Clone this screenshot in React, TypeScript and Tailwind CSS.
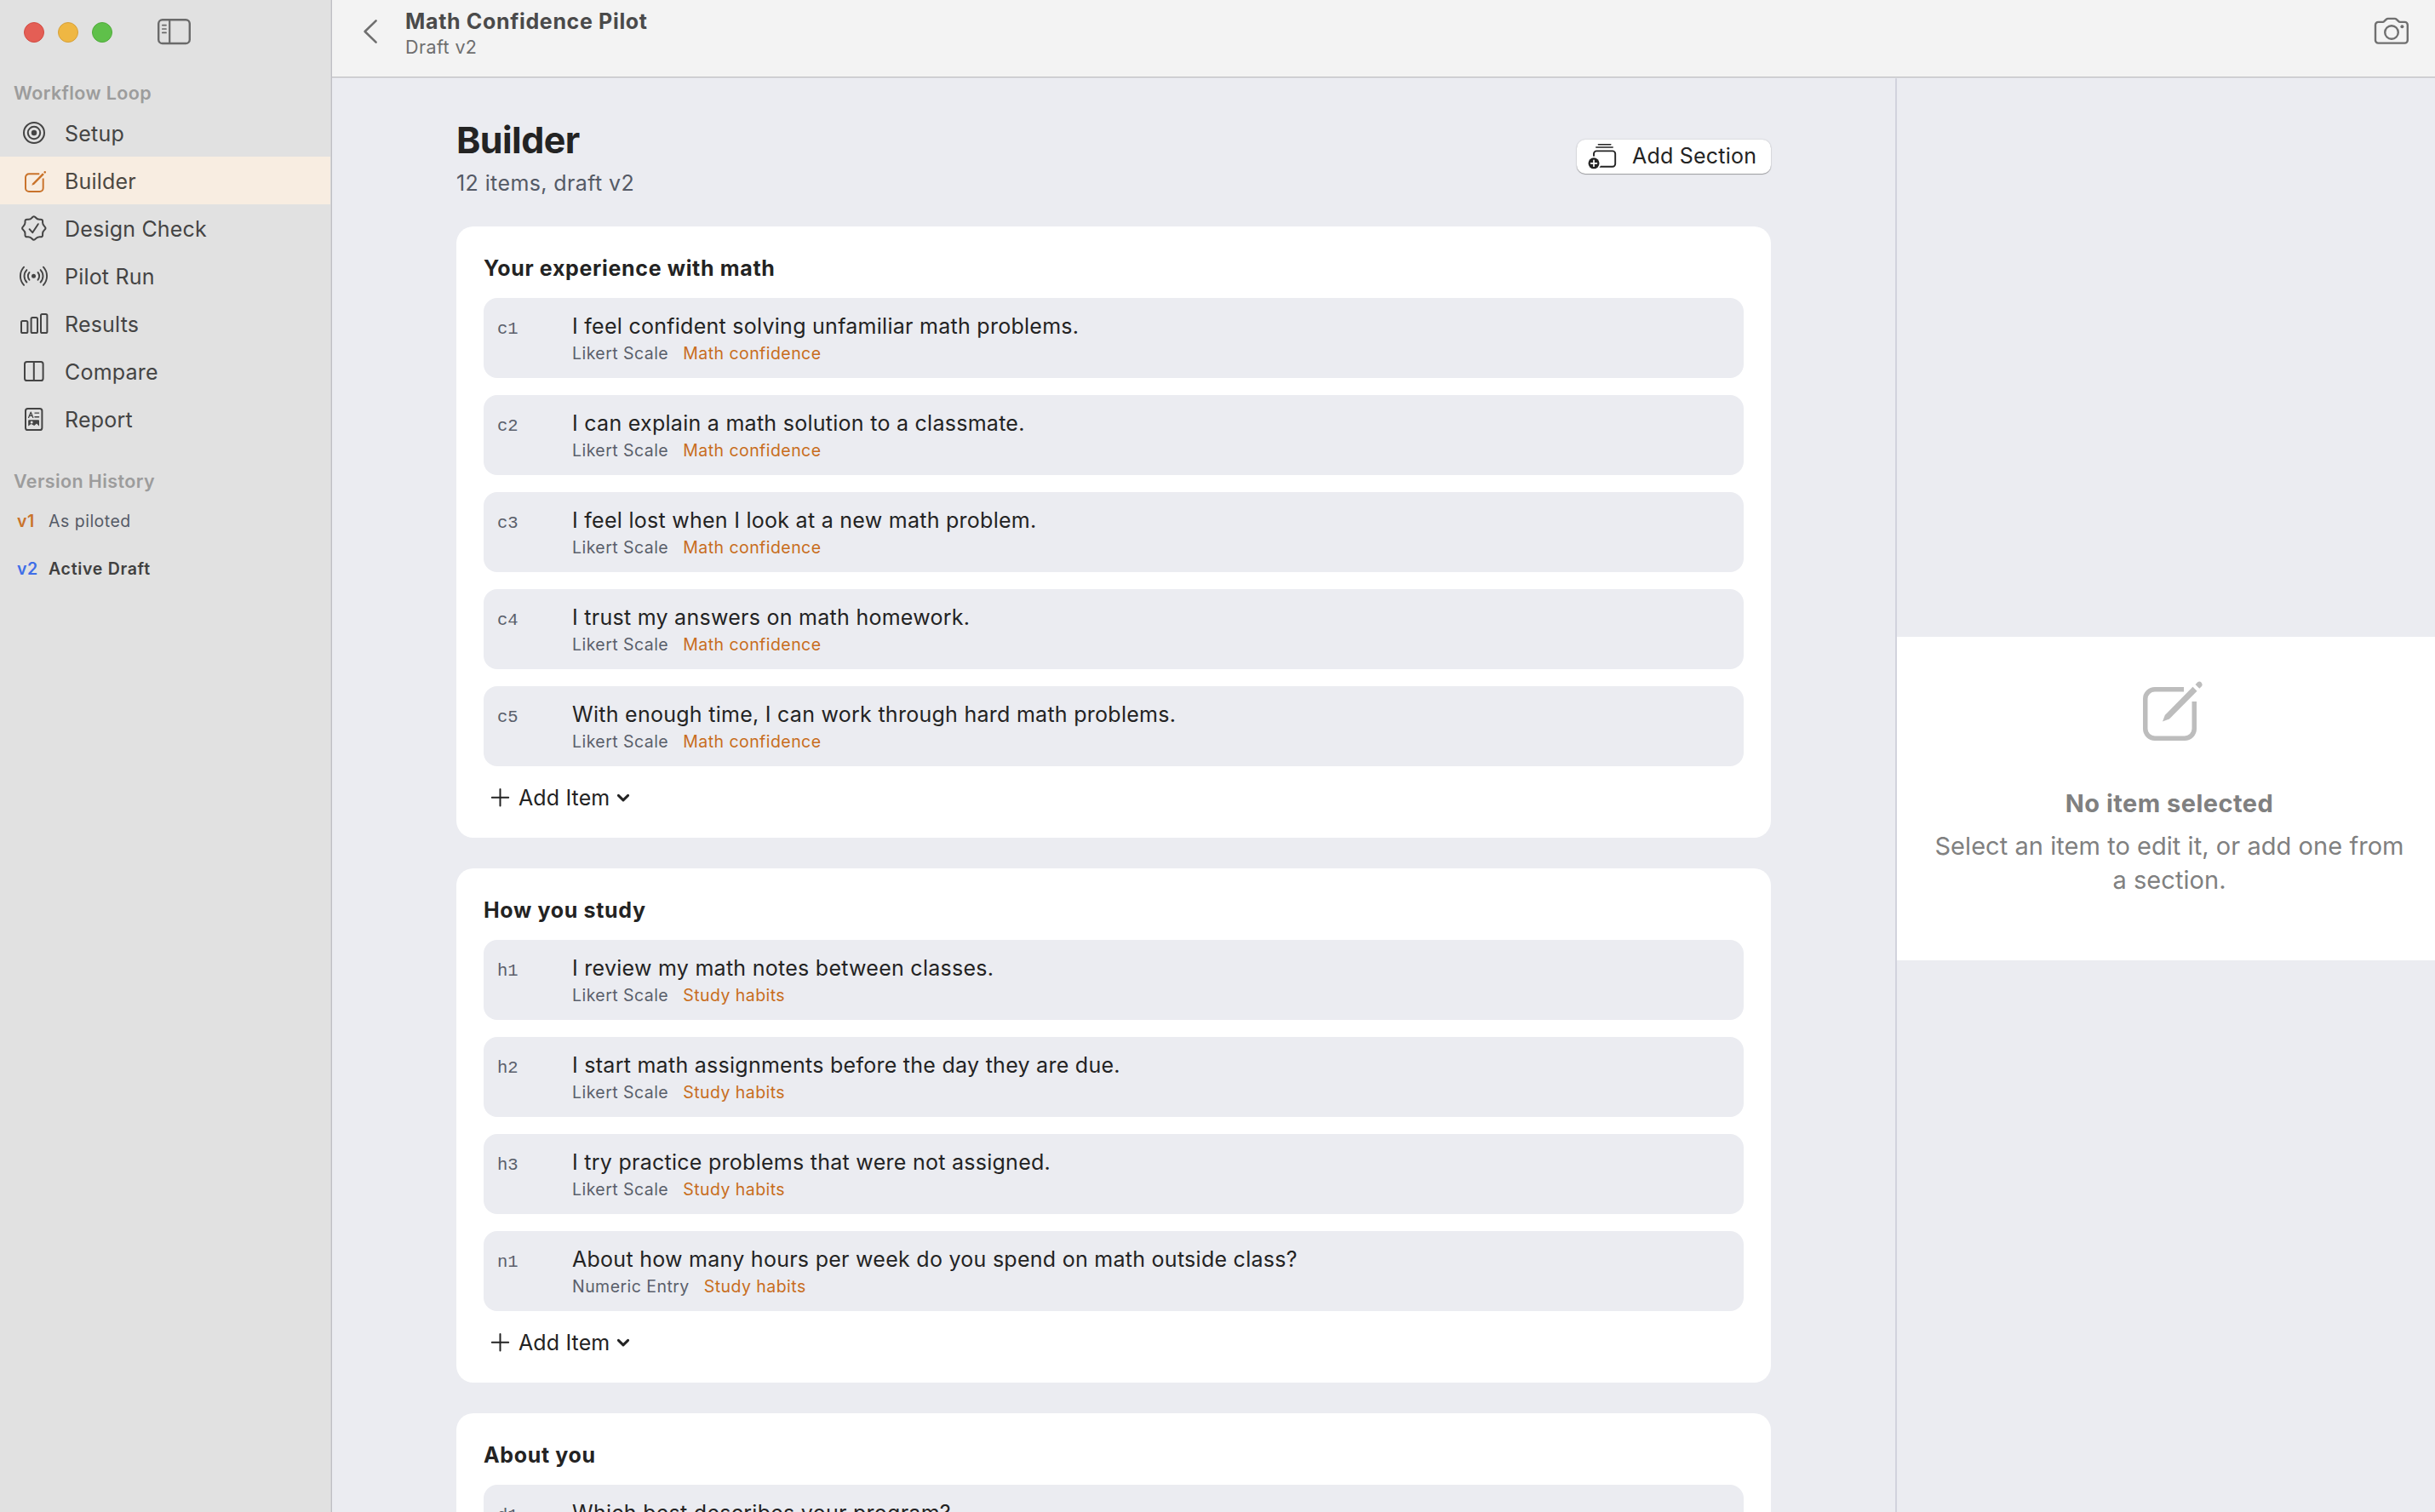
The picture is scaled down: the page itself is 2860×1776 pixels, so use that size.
import React, { ReactNode } from 'react';

interface Item {
  id: string;
  text: string;
  kind: string;
  construct: string;
}

interface Section {
  title: string;
  items: Item[];
}

const sections: Section[] = [
  {
    title: 'Your experience with math',
    items: [
      { id: 'c1', text: 'I feel confident solving unfamiliar math problems.', kind: 'Likert Scale', construct: 'Math confidence' },
      { id: 'c2', text: 'I can explain a math solution to a classmate.', kind: 'Likert Scale', construct: 'Math confidence' },
      { id: 'c3', text: 'I feel lost when I look at a new math problem.', kind: 'Likert Scale', construct: 'Math confidence' },
      { id: 'c4', text: 'I trust my answers on math homework.', kind: 'Likert Scale', construct: 'Math confidence' },
      { id: 'c5', text: 'With enough time, I can work through hard math problems.', kind: 'Likert Scale', construct: 'Math confidence' },
    ],
  },
  {
    title: 'How you study',
    items: [
      { id: 'h1', text: 'I review my math notes between classes.', kind: 'Likert Scale', construct: 'Study habits' },
      { id: 'h2', text: 'I start math assignments before the day they are due.', kind: 'Likert Scale', construct: 'Study habits' },
      { id: 'h3', text: 'I try practice problems that were not assigned.', kind: 'Likert Scale', construct: 'Study habits' },
      { id: 'n1', text: 'About how many hours per week do you spend on math outside class?', kind: 'Numeric Entry', construct: 'Study habits' },
    ],
  },
  {
    title: 'About you',
    items: [
      { id: 'd1', text: 'Which best describes your program?', kind: 'Single Choice', construct: 'Background' },
    ],
  },
];

// Eight-lobed seal outline, centred on 0,0
const sealPath = (() => {
  const at = (i: number) => {
    const r = i % 2 === 0 ? 15 : 10.8;
    const a = (i * Math.PI) / 8;
    return [r * Math.sin(a), -r * Math.cos(a)];
  };
  const mid = (i: number) => {
    const [x1, y1] = at(i);
    const [x2, y2] = at(i + 1);
    return `${((x1 + x2) / 2).toFixed(2)} ${((y1 + y2) / 2).toFixed(2)}`;
  };
  let d = `M${mid(-1)}`;
  for (let i = 0; i < 16; i++) {
    const [x, y] = at(i);
    d += `Q${x.toFixed(2)} ${y.toFixed(2)} ${mid(i)}`;
  }
  return d + 'Z';
})();

function NavIcon({ children }: { children: ReactNode }) {
  return (
    <svg viewBox="0 0 48 40" className="ml-4 mr-3 h-10 w-12 shrink-0" fill="none" stroke="currentColor" strokeWidth="2" strokeLinecap="round" strokeLinejoin="round">
      {children}
    </svg>
  );
}

function PencilSquareShape() {
  return (
    <>
      <path
        d="M48 10.75H14A11.25 11.25 0 0 0 2.75 22V57A11.25 11.25 0 0 0 14 68.25H49A11.25 11.25 0 0 0 60.25 57V25"
        fill="none"
        stroke="currentColor"
        strokeWidth="5.5"
        strokeLinecap="butt"
      />
      <path d="M23 48.5L25.8 41L58.5 7.8L63.5 12.8L31 45.5Z" fill="currentColor" stroke="none" />
      <path d="M61.5 5L64.5 2A3.6 3.6 0 0 1 69.3 6.8L66.3 9.8Z" fill="currentColor" stroke="none" />
    </>
  );
}

const SetupIcon = () => (
  <NavIcon>
    <circle cx="24" cy="20" r="12" />
    <circle cx="24" cy="20" r="7.2" />
    <circle cx="24" cy="20" r="3.2" fill="currentColor" stroke="none" />
  </NavIcon>
);

const BuilderIcon = () => (
  <NavIcon>
    <g transform="translate(13 8.4) scale(0.36)">
      <PencilSquareShape />
    </g>
  </NavIcon>
);

const CheckIcon = () => (
  <NavIcon>
    <g transform="translate(23.8 20)">
      <path d={sealPath} />
      <path d="M-5.2 1.2L-1.6 5.2L5 -4.8" />
    </g>
  </NavIcon>
);

const PilotIcon = () => (
  <NavIcon>
    <g transform="translate(23.5 20.3)" strokeWidth="1.9">
      <circle r="2.5" fill="currentColor" stroke="none" />
      <path d="M-5 -4.4A7.3 7.3 0 0 0 -5 4.4M-8.1 -7.2A10.4 10.4 0 0 0 -8.1 7.2M-11.4 -10.6A15.5 15.5 0 0 0 -11.4 10.6" />
      <path d="M5 -4.4A7.3 7.3 0 0 1 5 4.4M8.1 -7.2A10.4 10.4 0 0 1 8.1 7.2M11.4 -10.6A15.5 15.5 0 0 1 11.4 10.6" />
    </g>
  </NavIcon>
);

const ResultsIcon = () => (
  <NavIcon>
    <rect x="9" y="17" width="7.4" height="14" rx="1.6" />
    <rect x="20.6" y="13" width="7.4" height="18" rx="1.6" />
    <rect x="32" y="9" width="7.4" height="22" rx="1.6" />
  </NavIcon>
);

const CompareIcon = () => (
  <NavIcon>
    <rect x="13" y="9" width="21.6" height="22" rx="2.6" />
    <path d="M23.8 9V31" strokeLinecap="butt" />
  </NavIcon>
);

const ReportIcon = () => (
  <NavIcon>
    <rect x="14" y="8" width="19.4" height="25" rx="2.6" />
    <path d="M17.6 18.4L20.2 12.2L22.8 18.4M18.6 16.4H21.8" strokeWidth="1.3" />
    <path d="M25 13.1H29.6M25 17.7H29.6" strokeWidth="1.4" />
    <path d="M17.2 22.3a1 1 0 0 1 1-1H29a1 1 0 0 1 1 1V28.6L27 25.4L24.2 28L20.6 26L17.2 28.6Z" fill="currentColor" stroke="none" />
    <circle cx="21.2" cy="23.9" r="1.5" fill="#e1e1e1" stroke="none" />
  </NavIcon>
);

const navItems = [
  { label: 'Setup', icon: <SetupIcon /> },
  { label: 'Builder', icon: <BuilderIcon />, active: true },
  { label: 'Design Check', icon: <CheckIcon /> },
  { label: 'Pilot Run', icon: <PilotIcon /> },
  { label: 'Results', icon: <ResultsIcon /> },
  { label: 'Compare', icon: <CompareIcon /> },
  { label: 'Report', icon: <ReportIcon /> },
];

function SidebarHeading({ children }: { children: ReactNode }) {
  return <h2 className="pb-1 pl-4 text-[21.5px] leading-[30px] font-semibold tracking-[0.38px] text-[#9c9c9c]">{children}</h2>;
}

function Sidebar() {
  return (
    <aside className="flex w-[390px] shrink-0 flex-col border-r border-[#bfbfc4] bg-[#e1e1e1]">
      <div className="flex h-[76px] items-center border-r border-[#d5d5d7] pl-7">
        <div className="flex gap-4">
          <span className="size-6 rounded-full border border-[#d24b42] bg-[#e45e55]" />
          <span className="size-6 rounded-full border border-[#d6a03a] bg-[#efb743]" />
          <span className="size-6 rounded-full border border-[#50ab3a] bg-[#5fc04a]" />
        </div>
        <svg viewBox="0 0 40 32" className="mb-0.5 ml-[53px] h-8 w-10 text-[#6a6a6a]" fill="none" stroke="currentColor" strokeWidth="2.4" strokeLinecap="round">
          <rect x="1.2" y="2.2" width="36.6" height="27.8" rx="4.6" />
          <path d="M14.2 2.2V30" strokeWidth="2.2" />
          <path d="M5.8 8.6H10M5.8 13H10M5.8 17.4H10" strokeWidth="1.7" />
        </svg>
      </div>
      <div className="flex-1 border-r border-[#d5d5d7]">
        <div className="flex h-[52px] flex-col justify-end">
          <SidebarHeading>Workflow Loop</SidebarHeading>
        </div>
        <nav className="tracking-[0.2px]">
          {navItems.map((item) => (
            <div
              key={item.label}
              className={item.active ? 'flex h-14 items-center bg-[#f8ede1] text-[#c9732b]' : 'flex h-14 items-center text-[#444444]'}
            >
              {item.icon}
              <span className={item.active ? 'pt-[3px] text-[25px] text-[#4c4842]' : 'pt-[3px] text-[25px]'}>{item.label}</span>
            </div>
          ))}
        </nav>
        <div className="flex h-16 flex-col justify-end">
          <SidebarHeading>Version History</SidebarHeading>
        </div>
        <div className="flex h-14 items-center pl-5 pt-0.5 text-[19.5px] tracking-[0.5px]">
          <span className="w-[37px] font-semibold text-[#c9732b]">v1</span>
          <span className="text-[#555a66]">As piloted</span>
        </div>
        <div className="flex h-14 items-center pl-5 pt-0.5 text-[19.5px] tracking-[0.5px]">
          <span className="w-[37px] font-semibold text-[#3f6ee8]">v2</span>
          <span className="font-semibold tracking-[0.7px] text-[#404040]">Active Draft</span>
        </div>
      </div>
    </aside>
  );
}

function Toolbar() {
  return (
    <header className="flex h-[92px] shrink-0 flex-col bg-[#f3f3f3]">
      <div className="flex h-[90px] items-start pl-9 pr-[30px]">
        <svg viewBox="0 0 20 32" className="mt-[21px] h-8 w-5 text-[#6f6f6f]" fill="none" stroke="currentColor" strokeWidth="2.6" strokeLinecap="round" strokeLinejoin="round">
          <path d="M15.6 3.4L2.6 16L15.6 28.6" />
        </svg>
        <div className="ml-[30px] mt-2.5 flex-1">
          <h1 className="text-[25px] leading-[30px] font-bold tracking-[0.66px] text-[#4a4a4a]">Math Confidence Pilot</h1>
          <p className="mt-px text-[21.5px] leading-[28px] tracking-[0.4px] text-[#6e6e6e]">Draft v2</p>
        </div>
        <svg viewBox="0 0 42 34" className="mt-5 h-[34px] w-[42px] text-[#6f6f6f]" fill="none" stroke="currentColor" strokeWidth="2.4" strokeLinejoin="round">
          <path d="M5.4 5.9H10.4C11.4 5.9 12 5.5 12.7 4.7L14.6 2.8C15.3 2.1 15.9 1.9 16.9 1.9H24.6C25.6 1.9 26.2 2.1 26.9 2.8L28.8 4.7C29.5 5.5 30.1 5.9 31.1 5.9H36.4A3.4 3.4 0 0 1 39.8 9.3V27.2A3.4 3.4 0 0 1 36.4 30.6H5.4A3.4 3.4 0 0 1 2 27.2V9.3A3.4 3.4 0 0 1 5.4 5.9Z" />
          <circle cx="21" cy="18" r="7.8" />
          <circle cx="33.4" cy="11.2" r="2" fill="currentColor" stroke="none" />
        </svg>
      </div>
      <div className="h-px bg-[#bebec1]" />
      <div className="h-px bg-[#dfe0e4]" />
    </header>
  );
}

function ItemRow({ item }: { item: Item }) {
  return (
    <li className="flex h-[94px] rounded-2xl bg-[#ebecf1] pl-4 pt-[17px]">
      <span className="w-22 pt-1 font-['Liberation_Mono',monospace] text-[20.5px] leading-8 text-[#5a5f6b]">{item.id}</span>
      <div>
        <p className="text-[25px] leading-8 tracking-[0.27px] text-[#232323]">{item.text}</p>
        <p className="mt-[3px] flex gap-[17px] text-[19.5px] leading-[26px] tracking-[0.45px]">
          <span className="text-[#5a5f6b]">{item.kind}</span>
          <span className="text-[#c86d20]">{item.construct}</span>
        </p>
      </div>
    </li>
  );
}

function SectionCard({ section }: { section: Section }) {
  return (
    <section className="shrink-0 rounded-[20px] bg-white px-8">
      <h3 className="h-[84px] pt-[33px] text-[25px] leading-8 font-bold tracking-[0.66px] text-[#232323]">{section.title}</h3>
      <ul className="flex flex-col gap-5">
        {section.items.map((item) => (
          <ItemRow key={item.id} item={item} />
        ))}
      </ul>
      <div className="flex h-[84px] items-start pl-2 pt-[21px] text-[#232323]">
        <svg viewBox="0 0 24 32" className="h-8 w-6" fill="none" stroke="currentColor" strokeWidth="2" strokeLinecap="round">
          <path d="M11.5 6V25.4M1.8 15.7H21.2" />
        </svg>
        <span className="ml-[9px] text-[25px] leading-8 tracking-[0.12px]">Add Item</span>
        <svg viewBox="0 0 16 32" className="ml-2 h-8 w-4" fill="none" stroke="currentColor" strokeWidth="3" strokeLinecap="round" strokeLinejoin="round">
          <path d="M2.4 13.4L8 18.8L13.6 13.4" />
        </svg>
      </div>
    </section>
  );
}

function AddSectionButton() {
  return (
    <button className="mt-[26px] flex h-10 w-[228px] items-center rounded-[10px] bg-white pl-2.5 text-[#232323] shadow-[0_1px_1px_rgba(0,0,0,0.3),0_0_2px_rgba(0,0,0,0.2)]">
      <svg viewBox="0 0 40 34" className="-mt-0.5 h-[34px] w-10" fill="none" stroke="currentColor" strokeWidth="1.9" strokeLinecap="round">
        <rect x="10" y="11.4" width="25.2" height="18.4" rx="3.2" />
        <path d="M12.8 7H32.2M15.4 3.7H29.8" strokeWidth="1.6" />
        <circle cx="10" cy="25.8" r="8.4" fill="#fff" stroke="none" />
        <circle cx="10" cy="25.8" r="6.5" fill="currentColor" stroke="none" />
        <path d="M10 22.4V29.2M6.6 25.8H13.4" stroke="#fff" strokeWidth="1.7" />
      </svg>
      <span className="ml-[15px] pb-0.5 text-[25px] leading-8 tracking-[0.22px]">Add Section</span>
    </button>
  );
}

function Inspector() {
  return (
    <aside className="flex w-[634px] shrink-0 flex-col justify-center border-l-2 border-[#d2d3dd] pt-2">
      <div className="flex h-[380px] flex-col items-center bg-white pl-2 pt-[51px]">
        <svg viewBox="0 0 72 72" className="ml-2.5 size-[72px] text-[#bdbdbd]">
          <PencilSquareShape />
        </svg>
        <h3 className="mt-[55px] text-[29px] leading-9 font-bold tracking-[0.45px] text-[#808080]">No item selected</h3>
        <p className="mt-3 w-[570px] text-center text-[29px] leading-10 tracking-[0.05px] text-[#808080]">Select an item to edit it, or add one from a section.</p>
      </div>
    </aside>
  );
}

export default function App() {
  return (
    <div className="flex h-[1776px] w-[2860px] overflow-hidden bg-[#ebecf1] font-['Inter',sans-serif]">
      <Sidebar />
      <div className="flex min-w-0 flex-1 flex-col">
        <Toolbar />
        <div className="flex min-h-0 flex-1">
          <main className="flex min-w-0 flex-1 flex-col overflow-hidden px-[146px]">
            <div className="flex h-[174px] shrink-0 items-start justify-between pt-[46px]">
              <div>
                <h2 className="text-[43px] leading-[52px] font-bold tracking-[-0.6px] text-[#232323]">Builder</h2>
                <p className="mt-[9px] text-[25px] leading-8 tracking-[0.4px] text-[#555a66]">12 items, draft v2</p>
              </div>
              <AddSectionButton />
            </div>
            <div className="flex flex-col gap-9">
              {sections.map((section) => (
                <SectionCard key={section.title} section={section} />
              ))}
            </div>
          </main>
          <Inspector />
        </div>
      </div>
    </div>
  );
}
